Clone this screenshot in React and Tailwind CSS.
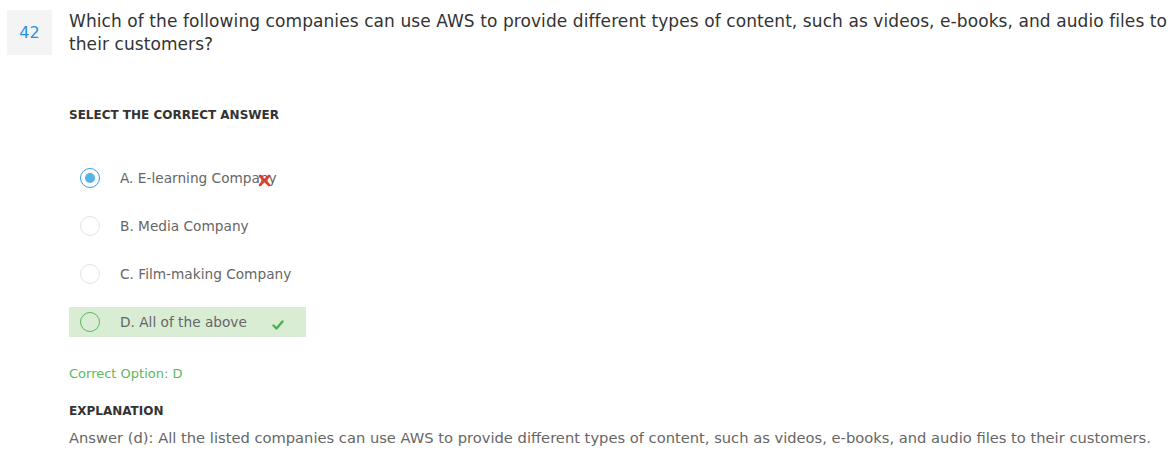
import React from "react";

const font = { fontFamily: '"DejaVu Sans", "Liberation Sans", sans-serif' };

function Radio({ state }) {
  if (state === "selected") {
    return (
      <span className="flex h-[20px] w-[20px] shrink-0 items-center justify-center rounded-full border-[1.5px] border-[#3b9be8] bg-white">
        <span className="h-[10px] w-[10px] rounded-full bg-[#56b3e8]" />
      </span>
    );
  }
  if (state === "correct") {
    return <span className="h-[20px] w-[20px] shrink-0 rounded-full border-[1.5px] border-[#5cb85c]" />;
  }
  return <span className="h-[20px] w-[20px] shrink-0 rounded-full border border-[#e3e3e3] bg-white" />;
}

function Option({ label, state, mark }) {
  return (
    <div
      className={`relative flex h-[30px] w-[237px] items-center gap-[20px] pl-[11px] ${
        state === "correct" ? "bg-[#d9edd5]" : ""
      }`}
    >
      <Radio state={state} />
      <span className="whitespace-nowrap text-[13.7px] leading-[18px] text-[#666]">{label}</span>
      {mark === "wrong" && (
        <svg className="absolute left-[189px] top-[11px]" width="13" height="13" viewBox="0 0 13 13">
          <path d="M2 2 L11 11 M11 2 L2 11" stroke="#e0402f" strokeWidth="2.6" strokeLinecap="round" />
        </svg>
      )}
      {mark === "right" && (
        <svg className="ml-[5px] mt-[6px]" width="12" height="10" viewBox="0 0 12 10">
          <path d="M1.5 5.5 L4.5 8.5 L10.5 1.5" fill="none" stroke="#4cae4c" strokeWidth="2.4" strokeLinecap="round" strokeLinejoin="round" />
        </svg>
      )}
    </div>
  );
}

export default function App() {
  return (
    <div className="h-[454px] w-[1173px] overflow-hidden bg-white" style={font}>
      <div className="flex pl-[7px] pt-[10px]">
        <div className="flex h-[45px] w-[45px] shrink-0 items-center justify-center bg-[#f4f4f4] text-[16px] text-[#2d8fe6]">
          42
        </div>
        <p className="ml-[17px] whitespace-nowrap text-[17px] leading-[23px] tracking-[0.08px] text-[#333]">
          Which of the following companies can use AWS to provide different types of content, such as videos, e-books, and audio files to
          <br />
          their customers?
        </p>
      </div>

      <div className="pl-[69px]">
        <div className="mt-[51px] text-[12px] font-bold leading-[16px] text-[#333]">SELECT THE CORRECT ANSWER</div>

        <div className="mt-[40px] flex flex-col gap-[18px]">
          <Option label="A. E-learning Company" state="selected" mark="wrong" />
          <Option label="B. Media Company" />
          <Option label="C. Film-making Company" />
          <Option label="D. All of the above" state="correct" mark="right" />
        </div>

        <div className="mt-[28px] text-[13px] leading-[18px] text-[#5cb85c]">Correct Option: D</div>

        <div className="mt-[20px] text-[12px] font-bold leading-[16px] text-[#333]">EXPLANATION</div>

        <p className="mt-[9px] whitespace-nowrap text-[14.7px] leading-[20px] text-[#666]">
          Answer (d): All the listed companies can use AWS to provide different types of content, such as videos, e-books, and audio files to their customers.
        </p>
      </div>
    </div>
  );
}
